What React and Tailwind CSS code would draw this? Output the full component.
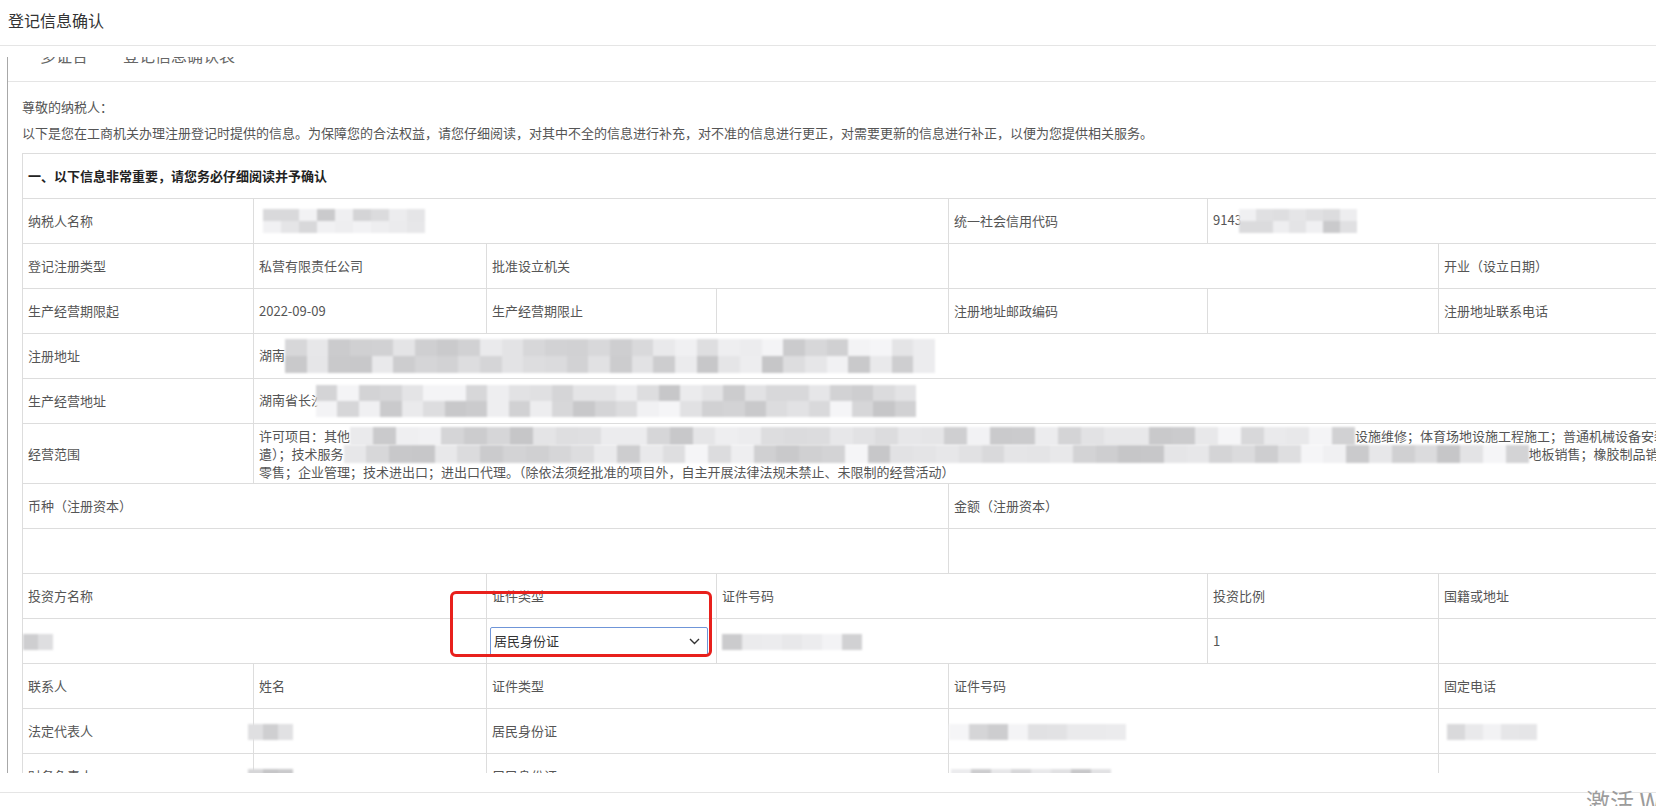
import clsx from "clsx";

// Grey pixel blocks standing in for the redacted values in the screenshot.
function Mosaic({ className, cols = 8, rows = 2, seed = 1 }) {
  const cells = [];
  let s = seed * 7919;
  for (let i = 0; i < cols * rows; i++) {
    s = (s * 9301 + 49297) % 233280;
    const v = 198 + Math.floor((s / 233280) * 48);
    cells.push(`rgb(${v},${v},${v + 2})`);
  }
  return (
    <span
      className={clsx("inline-grid align-middle blur-[1.2px]", className)}
      style={{ gridTemplateColumns: `repeat(${cols}, 1fr)` }}
    >
      {cells.map((c, i) => (
        <span key={i} style={{ background: c }} />
      ))}
    </span>
  );
}

const td = "border border-[#ddd] px-[5px] align-middle";

function IdSelect() {
  return (
    <div className="relative w-[218px]">
      <select
        defaultValue="居民身份证"
        className="h-[29px] w-full appearance-none rounded-[2px] border border-[#6f95d8] bg-white pl-[3px] text-[13px] text-[#333] outline-none"
      >
        <option>居民身份证</option>
        <option>护照</option>
        <option>港澳居民来往内地通行证</option>
      </select>
      <svg
        className="pointer-events-none absolute right-[8px] top-[11px]"
        width="11"
        height="7"
        viewBox="0 0 11 7"
        fill="none"
      >
        <path d="M1 1l4.5 4.5L10 1" stroke="#333" strokeWidth="1.4" />
      </svg>
    </div>
  );
}

export default function App() {
  return (
    <div className="relative h-[806px] w-[1656px] overflow-hidden bg-white font-['Noto_Sans_CJK_SC','Noto_Sans',sans-serif] text-[13px] text-[#555]">
      <header className="h-[46px] border-b border-[#e5e5e5] pl-[8px] text-[16px] leading-[40px] text-[#333]">
        登记信息确认
      </header>

      {/* scrolled content pane, clipped top and bottom */}
      <div className="ml-[7px] mt-[11px] h-[716px] overflow-hidden border-l border-[#a8a8a8]">
        <div className="-mt-[17px]">
          <div className="flex h-[42px] border-b border-[#e5e5e5] pl-[32px] text-[16px] leading-[31px] text-[#666]">
            <span>多证合一</span>
            <span className="ml-[19px]">登记信息确认表</span>
          </div>

          <div className="pl-[14px] pt-[12px]">
            <p className="leading-[26px]">尊敬的纳税人：</p>
            <p className="leading-[26px]">
              以下是您在工商机关办理注册登记时提供的信息。为保障您的合法权益，请您仔细阅读，对其中不全的信息进行补充，对不准的信息进行更正，对需要更新的信息进行补正，以便为您提供相关服务。
            </p>

            <table className="mt-[7px] w-[1647px] table-fixed border-collapse leading-[18px]">
              <colgroup>
                <col className="w-[231px]" />
                <col className="w-[233px]" />
                <col className="w-[230px]" />
                <col className="w-[232px]" />
                <col className="w-[259px]" />
                <col className="w-[231px]" />
                <col className="w-[231px]" />
              </colgroup>
              <tbody>
                <tr className="h-[45px]">
                  <td colSpan={7} className={clsx(td, "font-bold text-[#222]")}>
                    一、以下信息非常重要，请您务必仔细阅读并予确认
                  </td>
                </tr>
                <tr className="h-[45px]">
                  <td className={td}>纳税人名称</td>
                  <td colSpan={3} className={td}>
                    <Mosaic className="ml-[4px] h-[24px] w-[162px]" cols={9} seed={3} />
                  </td>
                  <td className={td}>统一社会信用代码</td>
                  <td colSpan={2} className={clsx(td, "whitespace-nowrap")}>
                    9143
                    <Mosaic className="-ml-[3px] h-[24px] w-[118px]" cols={7} seed={5} />
                  </td>
                </tr>
                <tr className="h-[45px]">
                  <td className={td}>登记注册类型</td>
                  <td className={td}>私营有限责任公司</td>
                  <td colSpan={2} className={td}>批准设立机关</td>
                  <td colSpan={2} className={td}></td>
                  <td className={td}>开业（设立日期）</td>
                </tr>
                <tr className="h-[45px]">
                  <td className={td}>生产经营期限起</td>
                  <td className={td}>2022-09-09</td>
                  <td className={td}>生产经营期限止</td>
                  <td className={td}></td>
                  <td className={td}>注册地址邮政编码</td>
                  <td className={td}></td>
                  <td className={td}>注册地址联系电话</td>
                </tr>
                <tr className="h-[45px]">
                  <td className={td}>注册地址</td>
                  <td colSpan={6} className={clsx(td, "whitespace-nowrap")}>
                    湖南
                    <Mosaic className="h-[34px] w-[650px]" cols={30} seed={7} />
                  </td>
                </tr>
                <tr className="h-[45px]">
                  <td className={td}>生产经营地址</td>
                  <td colSpan={6} className={clsx(td, "whitespace-nowrap")}>
                    湖南省长沙
                    <Mosaic className="-ml-[8px] h-[32px] w-[600px]" cols={28} seed={11} />
                  </td>
                </tr>
                <tr className="h-[60px]">
                  <td className={td}>经营范围</td>
                  <td colSpan={6} className={clsx(td, "whitespace-nowrap")}>
                    <div className="h-[18px]">
                      许可项目：其他
                      <Mosaic className="h-[18px] w-[1005px] align-top" cols={44} rows={1} seed={13} />
                      设施维修；体育场地设施工程施工；普通机械设备安装服务；
                    </div>
                    <div className="h-[18px]">
                      遣）；技术服务
                      <Mosaic className="h-[18px] w-[1185px] align-top" cols={52} rows={1} seed={17} />
                      地板销售；橡胶制品销售；
                    </div>
                    <div className="h-[18px]">
                      零售；企业管理；技术进出口；进出口代理。（除依法须经批准的项目外，自主开展法律法规未禁止、未限制的经营活动）
                    </div>
                  </td>
                </tr>
                <tr className="h-[45px]">
                  <td colSpan={4} className={td}>币种（注册资本）</td>
                  <td colSpan={3} className={td}>金额（注册资本）</td>
                </tr>
                <tr className="h-[45px]">
                  <td colSpan={4} className={td}></td>
                  <td colSpan={3} className={td}></td>
                </tr>
                <tr className="h-[45px]">
                  <td colSpan={2} className={td}>投资方名称</td>
                  <td className={td}>证件类型</td>
                  <td colSpan={2} className={td}>证件号码</td>
                  <td className={td}>投资比例</td>
                  <td className={td}>国籍或地址</td>
                </tr>
                <tr className="h-[45px]">
                  <td colSpan={2} className={td}>
                    <Mosaic className="-ml-[5px] h-[16px] w-[30px]" cols={2} rows={1} seed={19} />
                  </td>
                  <td className="border border-[#ddd] px-[3px] align-middle">
                    <IdSelect />
                  </td>
                  <td colSpan={2} className={td}>
                    <Mosaic className="h-[16px] w-[140px]" cols={7} rows={1} seed={23} />
                  </td>
                  <td className={td}>1</td>
                  <td className={td}></td>
                </tr>
                <tr className="h-[45px]">
                  <td className={td}>联系人</td>
                  <td className={td}>姓名</td>
                  <td colSpan={2} className={td}>证件类型</td>
                  <td colSpan={2} className={td}>证件号码</td>
                  <td className={td}>固定电话</td>
                </tr>
                <tr className="h-[45px]">
                  <td className={td}>法定代表人</td>
                  <td className={td}>
                    <Mosaic className="-ml-[11px] h-[16px] w-[45px]" cols={3} rows={1} seed={29} />
                  </td>
                  <td colSpan={2} className={td}>居民身份证</td>
                  <td colSpan={2} className={td}>
                    <Mosaic className="-ml-[5px] h-[16px] w-[177px]" cols={9} rows={1} seed={31} />
                  </td>
                  <td className={td}>
                    <Mosaic className="ml-[3px] h-[16px] w-[90px]" cols={5} rows={1} seed={37} />
                  </td>
                </tr>
                <tr className="h-[45px]">
                  <td className={td}>财务负责人</td>
                  <td className={td}>
                    <Mosaic className="-ml-[11px] h-[16px] w-[45px]" cols={3} rows={1} seed={41} />
                  </td>
                  <td colSpan={2} className={td}>居民身份证</td>
                  <td colSpan={2} className={td}>
                    <Mosaic className="-ml-[3px] h-[16px] w-[160px]" cols={8} rows={1} seed={43} />
                  </td>
                  <td className={td}></td>
                </tr>
              </tbody>
            </table>
          </div>
        </div>
      </div>

      <div className="mt-[19px] border-t border-[#e5e5e5]" />

      {/* red annotation box drawn over the select */}
      <div className="absolute left-[450px] top-[591px] h-[66px] w-[262px] rounded-[6px] border-[3px] border-[#e8201c]" />

      {/* OS activation watermark peeking in at the bottom */}
      <div className="absolute left-[1586px] top-[789px] whitespace-nowrap text-[24px] leading-none text-[#9c9c9c]">
        激活 Windows
      </div>
    </div>
  );
}
